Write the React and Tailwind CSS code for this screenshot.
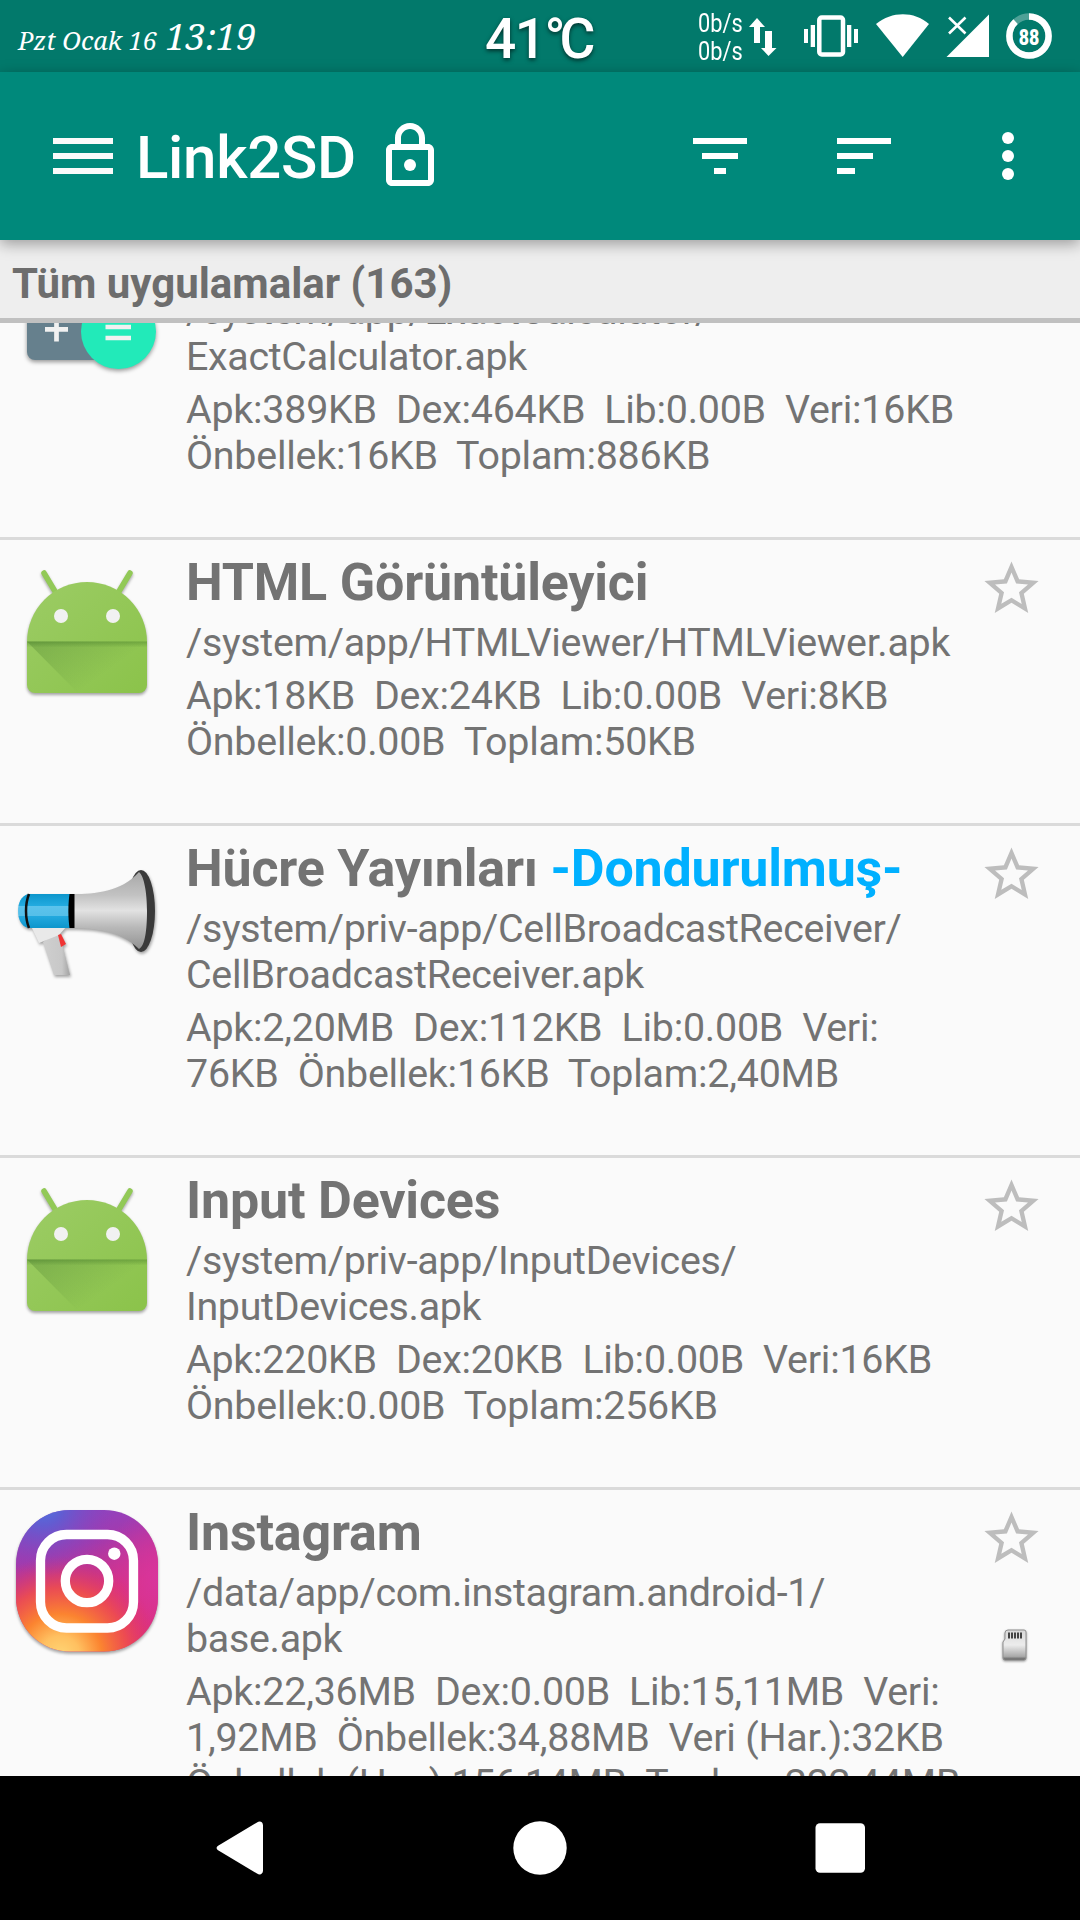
import clsx from "clsx";

const apps = [
  {
    id: "calculator",
    icon: CalculatorIcon,
    name: "",
    path: ["/system/app/ExactCalculator/", "ExactCalculator.apk"],
    sizes: ["Apk:389KB  Dex:464KB  Lib:0.00B  Veri:16KB", "Önbellek:16KB  Toplam:886KB"],
  },
  {
    id: "html",
    icon: AndroidIcon,
    name: "HTML Görüntüleyici",
    path: ["/system/app/HTMLViewer/HTMLViewer.apk"],
    sizes: ["Apk:18KB  Dex:24KB  Lib:0.00B  Veri:8KB", "Önbellek:0.00B  Toplam:50KB"],
  },
  {
    id: "cell",
    icon: MegaphoneIcon,
    name: "Hücre Yayınları",
    frozen: true,
    path: ["/system/priv-app/CellBroadcastReceiver/", "CellBroadcastReceiver.apk"],
    sizes: ["Apk:2,20MB  Dex:112KB  Lib:0.00B  Veri:", "76KB  Önbellek:16KB  Toplam:2,40MB"],
  },
  {
    id: "input",
    icon: AndroidIcon,
    name: "Input Devices",
    path: ["/system/priv-app/InputDevices/", "InputDevices.apk"],
    sizes: ["Apk:220KB  Dex:20KB  Lib:0.00B  Veri:16KB", "Önbellek:0.00B  Toplam:256KB"],
  },
  {
    id: "instagram",
    icon: InstagramIcon,
    name: "Instagram",
    onCard: true,
    path: ["/data/app/com.instagram.android-1/", "base.apk"],
    sizes: [
      "Apk:22,36MB  Dex:0.00B  Lib:15,11MB  Veri:",
      "1,92MB  Önbellek:34,88MB  Veri (Har.):32KB",
      "Önbellek (Har.):156,14MB  Toplam:232,44MB",
    ],
  },
];

function CalculatorIcon() {
  return (
    <svg viewBox="0 0 144 144" className="size-36 drop-shadow-[0_2px_2px_rgba(0,0,0,0.4)]">
      <rect x="12" y="10" width="84" height="124" rx="8" fill="#66808d" />
      <path d="M30 103.300h23M41.500 92v23.500" stroke="#f1f1f1" strokeWidth="4.700" />
      <circle cx="103.500" cy="105.500" r="37.500" fill="#22eab9" />
      <path d="M90.500 101h25.500M90.500 112h25.500" stroke="#f1f1f1" strokeWidth="4.700" />
    </svg>
  );
}

function AndroidIcon() {
  return (
    <svg viewBox="0 0 144 144" className="size-36 drop-shadow-[0_2px_1.5px_rgba(0,0,0,0.35)]">
      <defs>
        <linearGradient id="androidBody" x1="0" y1="0" x2="1" y2="1">
          <stop offset="0" stopColor="#9ccc65" />
          <stop offset="1" stopColor="#8bc34a" />
        </linearGradient>
        <linearGradient id="androidFold" x1="0" y1="0" x2="1" y2="0.6">
          <stop offset="0" stopColor="#33691e" stopOpacity="0.28" />
          <stop offset="0.75" stopColor="#33691e" stopOpacity="0" />
        </linearGradient>
        <linearGradient id="androidLip" x1="0" y1="0" x2="0" y2="1">
          <stop offset="0" stopColor="#33691e" stopOpacity="0.35" />
          <stop offset="1" stopColor="#33691e" stopOpacity="0" />
        </linearGradient>
      </defs>
      <path d="M29 15l12 20M115 15l-12 20" stroke="#92c957" strokeWidth="5.500" strokeLinecap="round" />
      <path d="M12 84a60 60 0 0 1 120 0v43a8 8 0 0 1-8 8H20a8 8 0 0 1-8-8z" fill="url(#androidBody)" />
      <path d="M12 83.500h120V135H63z" fill="url(#androidFold)" />
      <path d="M12 83.500h120v6H12z" fill="url(#androidLip)" />
      <circle cx="46" cy="58" r="7" fill="#f1f1f1" />
      <circle cx="98" cy="58" r="7" fill="#f1f1f1" />
    </svg>
  );
}

function MegaphoneIcon() {
  return (
    <svg viewBox="0 0 144 144" className="size-36 drop-shadow-[1px_2px_1.5px_rgba(0,0,0,0.35)]">
      <defs>
        <linearGradient id="horn" x1="0" y1="0" x2="0" y2="1">
          <stop offset="0" stopColor="#a8a8a8" />
          <stop offset="0.3" stopColor="#c2c2c2" />
          <stop offset="0.5" stopColor="#e2e2e2" />
          <stop offset="0.72" stopColor="#b8b8b8" />
          <stop offset="1" stopColor="#929292" />
        </linearGradient>
        <linearGradient id="barrel" x1="0" y1="0" x2="0" y2="1">
          <stop offset="0" stopColor="#0d96cc" />
          <stop offset="0.35" stopColor="#23abe0" />
          <stop offset="0.36" stopColor="#5cc3ec" />
          <stop offset="0.64" stopColor="#55bfe9" />
          <stop offset="0.65" stopColor="#23a9df" />
          <stop offset="1" stopColor="#0d96cc" />
        </linearGradient>
        <linearGradient id="grip" x1="0" y1="0" x2="1" y2="0">
          <stop offset="0" stopColor="#cfcfcf" />
          <stop offset="0.7" stopColor="#c8c8c8" />
          <stop offset="1" stopColor="#a2a2a2" />
        </linearGradient>
      </defs>
      <path d="M28 98l15-10 4 12 8 31H39z" fill="url(#grip)" />
      <path d="M16 82h36l-8 9-20 8z" fill="#e9e9e9" />
      <path d="M43 91l3-1 5 10-5 3z" fill="#f03434" />
      <ellipse cx="126" cy="67" rx="14" ry="41" fill="#3a3a3a" />
      <path d="M58 50c22 0 48-2 66-22 5 4 8 20 8 39s-2 35-8 38c-18-18-44-21-66-21z" fill="url(#horn)" />
      <path d="M13 50h44v34H13C6 82 3 75 3 67s3-15 10-17z" fill="url(#barrel)" />
      <path d="M14 50c-4 10-4 24 0 34" fill="none" stroke="#111" strokeWidth="2.500" />
      <path d="M54.500 50h5v34h-5c-1.500-10-1.500-24 0-34z" fill="#000" />
    </svg>
  );
}

function InstagramIcon() {
  return (
    <svg viewBox="0 0 144 144" className="size-36 drop-shadow-[0_2px_1.5px_rgba(0,0,0,0.35)]">
      <defs>
        <linearGradient id="igBase" x1="0.350" y1="0" x2="0.650" y2="1">
          <stop offset="0" stopColor="#8a45c4" />
          <stop offset="0.25" stopColor="#a33aae" />
          <stop offset="0.6" stopColor="#d6317f" />
          <stop offset="1" stopColor="#dd3079" />
        </linearGradient>
        <radialGradient id="igWarm" gradientUnits="userSpaceOnUse" cx="45" cy="148" r="100">
          <stop offset="0" stopColor="#ffd776" />
          <stop offset="0.2" stopColor="#ffc060" />
          <stop offset="0.42" stopColor="#fb8430" />
          <stop offset="0.68" stopColor="#f0504a" stopOpacity="0.85" />
          <stop offset="1" stopColor="#dd2f6c" stopOpacity="0" />
        </radialGradient>
        <radialGradient id="igCool" gradientUnits="userSpaceOnUse" cx="28" cy="-4" r="72">
          <stop offset="0" stopColor="#4a78e2" />
          <stop offset="0.3" stopColor="#5b60d4" stopOpacity="0.85" />
          <stop offset="1" stopColor="#8b3fb8" stopOpacity="0" />
        </radialGradient>
        <radialGradient id="igPink" gradientUnits="userSpaceOnUse" cx="150" cy="70" r="70">
          <stop offset="0" stopColor="#d935a0" />
          <stop offset="1" stopColor="#d935a0" stopOpacity="0" />
        </radialGradient>
      </defs>
      <rect x="1" y="2" width="142" height="141.500" rx="54" fill="url(#igBase)" />
      <rect x="1" y="2" width="142" height="141.500" rx="54" fill="url(#igPink)" />
      <rect x="1" y="2" width="142" height="141.500" rx="54" fill="url(#igWarm)" />
      <rect x="1" y="2" width="142" height="141.500" rx="54" fill="url(#igCool)" />
      <rect x="25.500" y="26.500" width="93" height="93.500" rx="26" fill="none" stroke="#fff" strokeWidth="9.300" />
      <circle cx="72" cy="73" r="21.700" fill="none" stroke="#fff" strokeWidth="9.300" />
      <circle cx="99.300" cy="45.700" r="6.200" fill="#fff" />
    </svg>
  );
}

function StarIcon() {
  return (
    <svg viewBox="0 0 24 24" className="size-[65px]" fill="#bdbdbd">
      <path d="M22 9.240l-7.190-.62L12 2 9.190 8.630 2 9.240l5.460 4.730L5.820 21 12 17.270 18.180 21l-1.630-7.030L22 9.240zM12 15.400l-3.760 2.270 1-4.280-3.320-2.880 4.380-.38L12 6.100l1.710 4.040 4.380.38-3.320 2.880 1 4.280L12 15.400z" />
    </svg>
  );
}

function SdCardIcon() {
  return (
    <svg viewBox="0 0 26 36" className="h-9 w-[26px] drop-shadow-[0_1px_1px_rgba(0,0,0,0.4)]">
      <defs>
        <linearGradient id="card" x1="0" y1="0" x2="0" y2="1">
          <stop offset="0" stopColor="#d8d8d8" />
          <stop offset="0.5" stopColor="#ececec" />
          <stop offset="0.88" stopColor="#a9a9a9" />
          <stop offset="1" stopColor="#555" />
        </linearGradient>
      </defs>
      <path d="M6 2h16a2 2 0 0 1 2 2v26a2 2 0 0 1-2 2H3a2 2 0 0 1-2-2V14l2-3V5a3 3 0 0 1 3-3z" fill="url(#card)" stroke="#909090" />
      <path d="M7 4.500v6M10 4.500v6M13 4.500v6M16 4.500v6M19 4.500v6" stroke="#444" strokeWidth="2" />
    </svg>
  );
}

function StatusBar() {
  return (
    <div className="flex h-[72px] items-start bg-[#02796b] text-white">
      <div className="w-[485px] pl-[18px] font-['Noto_Serif','DejaVu_Serif_Condensed','DejaVu_Serif',serif] leading-[73px] whitespace-pre italic">
        <span className="text-[25.200px]">Pzt Ocak 16 </span>
        <span className="ml-0.5 text-[36px]">13:19</span>
      </div>
      <div className="w-[213px] text-[55px] leading-[79px] font-medium tracking-[-1.500px] [text-shadow:0_2px_4px_rgba(0,0,0,0.6)]">
        41<span className="tracking-[-6px]">°</span>C
      </div>
      <div className="w-[50px] origin-left scale-x-[0.87] pt-2.5 text-[25px] leading-7">
        <div>0b/s</div>
        <div>0b/s</div>
      </div>
      <svg viewBox="748 0 332 72" className="h-[72px] w-[332px]" fill="#fff">
        <path d="M757 18l8 9h-5v16h-6V27h-5zM768.500 56l-7.500-8h4V31h7v17h4.500z" />
        <rect x="819.300" y="17.500" width="23.700" height="37" rx="2.500" fill="none" stroke="#fff" strokeWidth="4.500" />
        <path d="M804 29h4v14h-4zM810.700 25h4.300v22h-4.300zM847 25h4.300v22H847zM854 29h4v14h-4z" />
        <path d="M902.700 57L876 24c16-13 38-13 53 0z" />
        <path d="M989 14.500V57h-42.500z" />
        <path d="M949 17.500l16.500 16M965.500 17.500l-16.500 16" stroke="#fff" strokeWidth="2.600" />
        <circle cx="1029" cy="36" r="19.600" fill="none" stroke="#fff" strokeOpacity="0.3" strokeWidth="6.500" />
        <circle
          cx="1029"
          cy="36"
          r="19.600"
          fill="none"
          stroke="#fff"
          strokeWidth="6.500"
          pathLength="100"
          strokeDasharray="88 12"
          transform="rotate(-90 1029 36)"
        />
        <text x="1029" y="45" textAnchor="middle" textLength="20.500" lengthAdjust="spacingAndGlyphs" className="text-[22px] font-black">
          88
        </text>
      </svg>
    </div>
  );
}

function Toolbar() {
  return (
    <header className="relative z-10 flex h-[168px] items-center bg-[#00897b] pt-px pr-9 pl-[53px] text-white shadow-[0_4px_14px_rgba(0,0,0,0.35)]">
      <svg viewBox="0 0 60 36" className="mb-px h-9 w-[60px]" fill="#fafafa">
        <path d="M0 0h60v6H0zM0 15h60v6H0zM0 30h60v6H0z" />
      </svg>
      <h1 className="mt-0.5 ml-[23px] w-[238px] text-[60px] font-medium tracking-[-0.300px]">Link2SD</h1>
      <svg viewBox="0 0 24 24" className="mb-px size-[72px]" fill="#fff">
        <circle cx="12" cy="15" r="2" />
        <path d="M18 8h-1V6c0-2.760-2.240-5-5-5S7 3.240 7 6v2H6c-1.100 0-2 .9-2 2v10c0 1.100.9 2 2 2h12c1.100 0 2-.9 2-2V10c0-1.100-.9-2-2-2zM9 6c0-1.660 1.340-3 3-3s3 1.340 3 3v2H9zm9 14H6V10h12z" />
      </svg>
      <div className="mb-px ml-auto flex gap-[72px]">
        <svg viewBox="0 0 24 24" className="size-[72px]" fill="#fff">
          <path d="M10 18h4v-2h-4v2zM3 6v2h18V6H3zm3 7h12v-2H6v2z" />
        </svg>
        <svg viewBox="0 0 24 24" className="size-[72px]" fill="#fff">
          <path d="M3 18h6v-2H3v2zM3 6v2h18V6H3zm0 7h12v-2H3v2z" />
        </svg>
        <svg viewBox="0 0 24 24" className="size-[72px]" fill="#fff">
          <circle cx="12" cy="6" r="2" />
          <circle cx="12" cy="12" r="2" />
          <circle cx="12" cy="18" r="2" />
        </svg>
      </div>
    </header>
  );
}

function AppRow({ app }) {
  const Icon = app.icon;
  return (
    <li
      className={clsx(
        "flex shrink-0 border-b-[3px] border-[#dadada] pl-[15px]",
        app.path.length > 1 ? "min-h-[332px]" : "min-h-[286px]"
      )}
    >
      <div className="w-[171px] pt-[18px]">
        <Icon />
      </div>
      <div className="w-[793px] pt-3 whitespace-pre">
        <h2 className="h-[62px] text-[52px] leading-[62px] font-bold tracking-[-0.200px]">
          {app.name}
          {app.frozen && <span className="text-[#00b0ff]"> -Dondurulmuş-</span>}
        </h2>
        <div className="mt-1.5 text-[39.400px] leading-[46px] tracking-[-0.300px]">
          {app.path.map((line) => (
            <p key={line}>{line}</p>
          ))}
        </div>
        <div className="mt-[7px] text-[39.400px] leading-[46px] tracking-[-0.240px]">
          {app.sizes.map((line) => (
            <p key={line}>{line}</p>
          ))}
        </div>
      </div>
      <div className="flex flex-col items-center pt-[15.600px]">
        <StarIcon />
        {app.onCard && (
          <div className="mt-[57px] ml-1.5">
            <SdCardIcon />
          </div>
        )}
      </div>
    </li>
  );
}

function NavBar() {
  return (
    <nav className="flex h-36 items-center bg-black">
      <svg viewBox="0 0 1080 144" className="h-36 w-full" fill="#fff">
        <path d="M218.500 69.500L257 46.500c3-2 6-.5 6 3v45c0 3.500-3 5-6 3l-38.500-23c-2.500-1.500-2.500-3.500 0-5z" />
        <circle cx="540" cy="72" r="26.700" />
        <rect x="815.500" y="47.300" width="49.500" height="49.500" rx="4.500" />
      </svg>
    </nav>
  );
}

export default function App() {
  return (
    <div className="flex h-[1920px] w-[1080px] flex-col overflow-hidden bg-[#fafafa] font-[Roboto,sans-serif] text-[#737373]">
      <StatusBar />
      <Toolbar />
      <div className="h-[83px] border-b-[5px] border-[#c0c0c0] bg-[#eee] pt-[19px] pl-3 text-[42px] leading-[50px] font-bold text-[#6d6d6d]">
        Tüm uygulamalar (163)
      </div>
      <div className="h-[1453px] overflow-hidden">
        <ul className="-mt-[115px] flex flex-col">
          {apps.map((app) => (
            <AppRow key={app.id} app={app} />
          ))}
        </ul>
      </div>
      <NavBar />
    </div>
  );
}
